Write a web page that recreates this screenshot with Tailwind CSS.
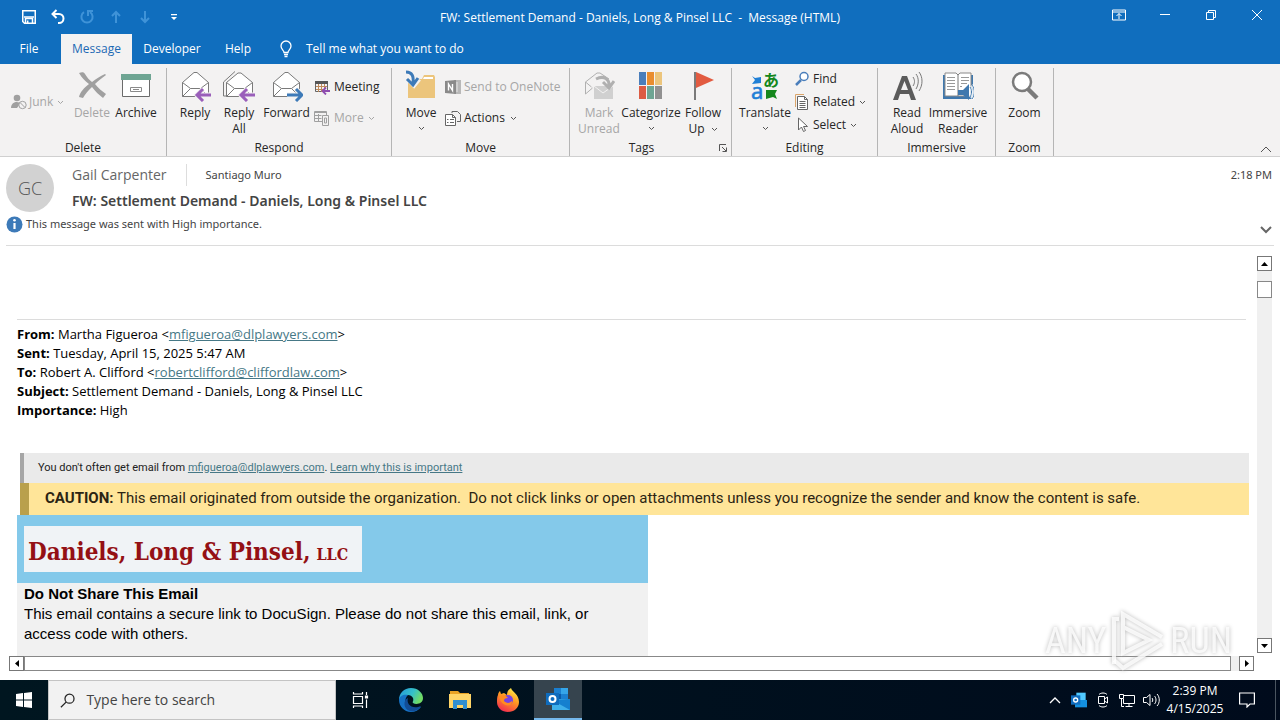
<!DOCTYPE html>
<html lang="en">
<head>
    <meta charset="UTF-8">
    <meta name="viewport" content="width=device-width, initial-scale=1.0">
    <title>FW: Settlement Demand - Daniels, Long &amp; Pinsel LLC - Message (HTML)</title>
    <script src="https://cdn.jsdelivr.net/npm/@tailwindcss/browser@4"></script>
</head>
<body class="h-screen flex flex-col overflow-hidden bg-white font-['Open_Sans',sans-serif] text-xs text-[#262626]">
    <!-- Title bar -->
    <header class="bg-[#106ebe] text-white shrink-0">
        <div class="grid grid-cols-[1fr_auto_1fr] h-[34px] items-center">
            <div class="flex items-center gap-[13px] pl-[21px]">
                <button aria-label="Save" class="w-4 h-4"><svg viewBox="0 0 16 16" fill="none" stroke="white" stroke-width="1.5"><path d="M1.75 1.75h12.5v12.5H3.5L1.75 12.5z"/><path d="M3 8h10"/><path d="M4.5 14v-4.5h7V14M6.7 11.5V14" /></svg></button>
                <button aria-label="Undo" class="w-4 h-4"><svg viewBox="0 0 16 16" fill="none" stroke="white" stroke-width="2"><path d="M6.5 1L2.5 5l4 4"/><path d="M2.5 5H9a4.5 4.5 0 0 1 0 9H8"/></svg></button>
                <button aria-label="Redo" class="w-4 h-4"><svg viewBox="0 0 16 16" fill="none" stroke="#3f93d8" stroke-width="2"><path d="M5 3.2A5.6 5.6 0 1 0 11 3.2"/><path d="M9 7V2h5"/></svg></button>
                <button aria-label="Previous item" class="w-4 h-4"><svg viewBox="0 0 16 16" fill="none" stroke="#3f93d8" stroke-width="2"><path d="M8 14V3M4 7l4-4 4 4"/></svg></button>
                <button aria-label="Next item" class="w-4 h-4"><svg viewBox="0 0 16 16" fill="none" stroke="#3f93d8" stroke-width="2"><path d="M8 2v11M4 9l4 4 4-4"/></svg></button>
                <button aria-label="Customize toolbar" class="w-4 h-4"><svg viewBox="0 0 16 16"><path d="M5 5h6v1.3H5zM5 8h6l-3 3z" fill="white"/></svg></button>
            </div>
            <h1 class="whitespace-pre pt-0.5">FW: Settlement Demand - Daniels, Long &amp; Pinsel LLC  -  Message (HTML)</h1>
            <div class="flex justify-end items-center h-full pb-1">
                <button aria-label="Ribbon display options" class="w-[46px] flex justify-center"><svg width="14" height="12" viewBox="0 0 14 12" fill="none" stroke="white"><path d="M.5 1h13v10H.5zM.5 3h13M7 10V4.5M4.5 7L7 4.5 9.500 7"/></svg></button>
                <button aria-label="Minimize" class="w-[46px] flex justify-center"><svg width="12" height="12" viewBox="0 0 12 12" stroke="white"><path d="M1 5.500h10"/></svg></button>
                <button aria-label="Restore" class="w-[46px] flex justify-center"><svg width="12" height="12" viewBox="0 0 12 12" fill="none" stroke="white"><path d="M1.500 3.500h7v7h-7zM3.500 3V1.500h7v7H9"/></svg></button>
                <button aria-label="Close" class="w-[46px] flex justify-center"><svg width="12" height="12" viewBox="0 0 12 12" stroke="white"><path d="M1 1l10 10M11 1L1 11"/></svg></button>
            </div>
        </div>
        <nav class="flex h-[30px] items-stretch pl-1">
            <button class="w-[50px]">File</button>
            <button class="w-[71px] ml-[7px] bg-[#f3f2f2] text-[#1b69b4]">Message</button>
            <button class="w-20">Developer</button>
            <button class="w-[52px]">Help</button>
            <button class="flex items-center gap-3 ml-[14px]">
                <svg width="16" height="18" viewBox="0 0 16 18" fill="none" stroke="white" stroke-width="1.3"><path d="M6 12.500C6 10.500 3 9.500 3 6a5 5 0 0 1 10 0c0 3.500-3 4.500-3 6.500zM6 14.500h4M6.500 16.500h3"/></svg>
                Tell me what you want to do
            </button>
        </nav>
    </header>

    <!-- Ribbon -->
    <section class="relative flex h-[93px] shrink-0 bg-[#f3f2f2] border-b border-[#d0d0d0] pt-1 leading-4">
        <div class="w-[167px] flex flex-col border-r border-[#b5b5b5]">
            <div class="flex grow">
                <button class="w-[70px] h-16 pt-1 pl-[11px] flex items-center gap-0.5 text-[#a6a6a6]">
                    <svg width="16" height="16" viewBox="0 0 16 16"><circle cx="6" cy="4" r="3.300" fill="#a0a0a0"/><path d="M0 14c0-7 9-7 9-4l-3 4z" fill="#a0a0a0"/><circle cx="11.500" cy="11" r="3.700" fill="#f3f2f2" stroke="#a0a0a0"/><path d="M9 8.500l5 5" stroke="#a0a0a0"/></svg>
                    <span>Junk</span>
                    <svg width="7" height="5" viewBox="0 0 7 5" class="ml-0.5" fill="none" stroke="currentColor"><path d="M1 1l2.500 2.500L6 1"/></svg>
                </button>
                <button class="w-11 flex flex-col items-center text-[#a6a6a6]">
                    <svg width="32" height="32" viewBox="0 0 32 32" class="mt-0.5 mb-[3px]" fill="#a0a0a0"><path d="M3 3c3-1 5-1 6 1 2 3 4 6 7 8 4-3 8-6 13-8l1 1c-4 3-8 6-11 9 3 4 7 7 11 10l-3 4c-4-3-8-7-11-11-4 4-7 7-9 11l-4-1c1-5 5-9 10-13C9 11 6 8 3 3z"/></svg>
                    <span>Delete</span>
                </button>
                <button class="w-11 flex flex-col items-center">
                    <svg width="32" height="32" viewBox="0 0 32 32" class="mt-0.5 mb-[3px]"><path d="M2.500 8.500h27v18h-27z" fill="white" stroke="#6b6b6b"/><path d="M1 4h30v6H1z" fill="#6ea593"/><path d="M10.500 17.500h11v4h-11z" fill="white" stroke="#8a8a8a"/><path d="M13 19.500h6" stroke="#8a8a8a"/></svg>
                    <span>Archive</span>
                </button>
            </div>
            <span class="text-center">Delete</span>
        </div>
        <div class="w-[225px] flex flex-col border-r border-[#b5b5b5]">
            <div class="flex grow items-start pl-1.5">
                <button class="w-11 flex flex-col items-center">
                    <svg width="32" height="32" viewBox="0 0 32 32" class="mt-0.5 mb-[3px]" fill="white" stroke="#7a7a7a"><path d="M3.500 12.500L15 2.500h3l11.500 10v14h-26z"/><path d="M3.500 12.500l8 6h10l8-6M3.500 26.500l8-8M29.500 26.500l-8-8" fill="none"/><path d="M32 25H19M24 19l-6 6 6 6" stroke="#f3f2f2" stroke-width="5" fill="none"/><path d="M32 25H19M24 19l-6 6 6 6" stroke="#9a5fba" stroke-width="3" fill="none"/></svg>
                    <span>Reply</span>
                </button>
                <button class="w-11 flex flex-col items-center">
                    <svg width="32" height="32" viewBox="0 0 32 32" class="mt-0.5 mb-[3px]" fill="white" stroke="#7a7a7a"><path d="M3.500 26h-3V12L12 1.500" fill="none"/><path d="M3.500 12.500L15 3h3l11.500 9.500v14h-26z"/><path d="M3.500 12.500l8 6h10l8-6M3.500 26.500l8-8M29.500 26.500l-8-8" fill="none"/><path d="M32 25H19M24 19l-6 6 6 6" stroke="#f3f2f2" stroke-width="5" fill="none"/><path d="M32 25H19M24 19l-6 6 6 6" stroke="#9a5fba" stroke-width="3" fill="none"/></svg>
                    <span>Reply<br>All</span>
                </button>
                <button class="w-[51px] flex flex-col items-center">
                    <svg width="32" height="32" viewBox="0 0 32 32" class="mt-0.5 mb-[3px]" fill="white" stroke="#7a7a7a"><path d="M2.500 12.500L14 2.500h3l11.500 10v14h-26z"/><path d="M2.500 12.500l8 6h10l8-6M2.500 26.500l8-8M28.500 26.500l-8-8" fill="none"/><path d="M16 25h14M25 19l6 6-6 6" stroke="#f3f2f2" stroke-width="5" fill="none"/><path d="M16 25h14M25 19l6 6-6 6" stroke="#3d7ab8" stroke-width="3" fill="none"/></svg>
                    <span>Forward</span>
                </button>
                <div class="flex flex-col gap-[15px] pt-[11px] pl-0.5">
                    <button class="flex items-center gap-1">
                        <svg width="16" height="16" viewBox="0 0 16 16" fill="none"><path d="M1.500 2.500h12v10h-12z" stroke="#666"/><path d="M1 2h13v3H1z" fill="#555"/><path d="M4.500 5v8M7.500 5v8M10.500 5v4M2 7.500h11M2 10.500h7" stroke="#c08a5a"/><path d="M16 12H9M12 8.500L8.500 12l3.500 3.500" stroke="#8e4db0" stroke-width="1.800"/></svg>
                        <span>Meeting</span>
                    </button>
                    <button class="flex items-center gap-1 text-[#a6a6a6]">
                        <svg width="16" height="16" viewBox="0 0 16 16" fill="none" stroke="#a0a0a0"><path d="M.5 1.500h12v10H.5z"/><path d="M.5 2.500h12M.5 5.500h7M.5 8.500h7M4.500 4v7" /><path d="M8.500 5.500h6v10h-6z" fill="#f3f2f2"/><path d="M10.500 8v5h2V8z"/></svg>
                        <span>More</span>
                        <svg width="7" height="5" viewBox="0 0 7 5" fill="none" stroke="currentColor"><path d="M1 1l2.500 2.500L6 1"/></svg>
                    </button>
                </div>
            </div>
            <span class="text-center">Respond</span>
        </div>
        <div class="w-[178px] flex flex-col border-r border-[#b5b5b5]">
            <div class="flex grow items-start pl-2">
                <button class="w-[42px] flex flex-col items-center">
                    <svg width="32" height="32" viewBox="0 0 32 32" class="mt-0.5 mb-[3px]"><path d="M3 9h14l2-4h10l1 2v21H3z" fill="#ecc57c"/><path d="M19 7h9v2H18z" fill="white"/><path d="M2 2c6 0 8 4 7 12M4 10l5 5 5-6" fill="none" stroke="#f3f2f2" stroke-width="5"/><path d="M1 2c6 0 8 4 7 12M2 9l6 6 5-7" fill="none" stroke="#3d7ab8" stroke-width="3"/></svg>
                    <span>Move</span>
                    <svg width="7" height="5" viewBox="0 0 7 5" class="mt-[5px]" fill="none" stroke="#555"><path d="M1 1l2.500 2.500L6 1"/></svg>
                </button>
                <div class="flex flex-col gap-[15px] pt-[11px] pl-[3px]">
                    <button class="flex items-center gap-[3px] text-[#a6a6a6]">
                        <svg width="16" height="16" viewBox="0 0 16 16"><path d="M9 1h7v14H9z" fill="#b8b8b8"/><path d="M12 3v10" stroke="#e6e6e6"/><path d="M0 2l11-1v14L0 14z" fill="#8a8a8a"/><path d="M3.500 11.500V5l4 6.500V5" fill="none" stroke="white" stroke-width="1.400"/></svg>
                        <span>Send to OneNote</span>
                    </button>
                    <button class="flex items-center gap-[3px]">
                        <svg width="16" height="16" viewBox="0 0 16 16" fill="none" stroke="#666"><path d="M7 3V1.500h5.500l3 3v7H12"/><path d="M.5 4.500h7l3 3v8H.5z" fill="white"/><path d="M7.500 4.500v3h3M5 9.500h4M5 12.500h4M2 9.500h1.500M2 12.500h1.500"/></svg>
                        <span>Actions</span>
                        <svg width="7" height="5" viewBox="0 0 7 5" class="ml-0.5" fill="none" stroke="#555"><path d="M1 1l2.500 2.500L6 1"/></svg>
                    </button>
                </div>
            </div>
            <span class="text-center">Move</span>
        </div>
        <div class="w-[162px] flex flex-col border-r border-[#b5b5b5]">
            <div class="flex grow items-start pl-[7px]">
                <button class="w-11 flex flex-col items-center text-[#a6a6a6]">
                    <svg width="32" height="32" viewBox="0 0 32 32" class="mt-0.5 mb-[3px]" fill="none" stroke="#b0b0b0"><path d="M2.500 24V12L14 3h3l9 6M2.500 12l6 5M2.500 24l7-6"/><path d="M11 16h19v13H11z" fill="#d0d0d0" stroke="none"/><path d="M11 16l9 7 10-7" stroke="#f3f2f2"/><path d="M13 9c8-4 14 0 13 8M20 12l6 6 5-7" stroke="#b0b0b0" stroke-width="3"/></svg>
                    <span>Mark<br>Unread</span>
                </button>
                <button class="w-[60px] flex flex-col items-center">
                    <svg width="32" height="32" viewBox="0 0 32 32" class="mt-0.5 mb-[3px]"><path d="M4 2h7v13H4z" fill="#4a7ebb"/><path d="M12 2h7v13h-7z" fill="#e98d2f"/><path d="M20 2h7v13h-7z" fill="#ecc57c"/><path d="M4 16h7v13H4z" fill="#dc5c44"/><path d="M12 16h7v13h-7z" fill="#6ea593"/><path d="M20 16h7v13h-7z" fill="#919191"/></svg>
                    <span>Categorize</span>
                    <svg width="7" height="5" viewBox="0 0 7 5" class="mt-[5px]" fill="none" stroke="#555"><path d="M1 1l2.500 2.500L6 1"/></svg>
                </button>
                <button class="w-11 flex flex-col items-center">
                    <svg width="32" height="32" viewBox="0 0 32 32" class="mt-0.5 mb-[3px]"><path d="M8 2v28" stroke="#7a7a7a" stroke-width="2"/><path d="M9 2l18 8-18 8z" fill="#e25b41"/></svg>
                    <span>Follow</span>
                    <span class="flex items-center gap-1.5">Up <svg width="7" height="5" viewBox="0 0 7 5" fill="none" stroke="#555"><path d="M1 1l2.500 2.500L6 1"/></svg></span>
                </button>
            </div>
            <div class="grid grid-cols-[1fr_auto_1fr] items-center pr-[18px]">
                <span class="col-start-2">Tags</span>
                <button aria-label="Tag options" class="justify-self-end -mr-3.5"><svg width="8" height="8" viewBox="0 0 8 8" fill="none" stroke="#555"><path d="M.5 7V.5H7M3 3l4 4M7.500 3.500v4h-4"/></svg></button>
            </div>
        </div>
        <div class="w-[146px] flex flex-col border-r border-[#b5b5b5]">
            <div class="flex grow items-start pl-[9px]">
                <button class="w-12 flex flex-col items-center">
                    <svg width="32" height="32" viewBox="0 0 32 32" class="mt-0.5 mb-[3px] overflow-visible"><path d="M3 6l3 2 6-1v6l-9 1 3-4z" fill="#1f7fd6"/><text x="2" y="29" font-family="Noto Sans" font-size="22" fill="#1f7fd6" stroke="#1f7fd6" stroke-width=".6">a</text><text x="14" y="16" font-family="Noto Sans CJK JP" font-size="16" font-weight="700" fill="#14871c">あ</text><path d="M17 20h11l-2 4 2 5-4-2-7 2z" fill="#14871c"/></svg>
                    <span>Translate</span>
                    <svg width="7" height="5" viewBox="0 0 7 5" class="mt-[5px]" fill="none" stroke="#555"><path d="M1 1l2.500 2.500L6 1"/></svg>
                </button>
                <div class="flex flex-col gap-[7px] pt-[3px] pl-1.5">
                    <button class="flex items-center gap-0.5">
                        <svg width="16" height="16" viewBox="0 0 16 16" fill="none" stroke="#4a7ebb"><circle cx="9" cy="5.500" r="4" stroke-width="1.500" fill="white"/><path d="M6 9l-5 5" stroke-width="2.500"/></svg>
                        <span>Find</span>
                    </button>
                    <button class="flex items-center gap-0.5">
                        <svg width="16" height="16" viewBox="0 0 16 16" fill="none"><path d="M9 .5H.5V13" stroke="#dba56a"/><path d="M2.500 2.500h7l3 3v10h-10z" fill="white" stroke="#666"/><path d="M9.500 2.500v3h3M4.500 7.500h6M4.500 9.500h6M4.500 11.500h6M4.500 13.500h6" stroke="#666"/></svg>
                        <span>Related</span>
                        <svg width="7" height="5" viewBox="0 0 7 5" class="ml-0.5" fill="none" stroke="#555"><path d="M1 1l2.500 2.500L6 1"/></svg>
                    </button>
                    <button class="flex items-center gap-0.5">
                        <svg width="16" height="16" viewBox="0 0 16 16"><path d="M3.500 1v12l3-3 2 4.500 2-1L8.500 9.500h4z" fill="white" stroke="#666"/></svg>
                        <span>Select</span>
                        <svg width="7" height="5" viewBox="0 0 7 5" class="ml-0.5" fill="none" stroke="#555"><path d="M1 1l2.500 2.500L6 1"/></svg>
                    </button>
                </div>
            </div>
            <span class="text-center">Editing</span>
        </div>
        <div class="w-[118px] flex flex-col border-r border-[#b5b5b5]">
            <div class="flex grow items-start pl-[7px]">
                <button class="w-11 flex flex-col items-center">
                    <svg width="32" height="32" viewBox="0 0 32 32" class="mt-0.5 mb-[3px]"><path d="M2 30L11 6h5l9 24h-5l-2-6H9l-2 6zM10 20h7l-3.500-9z" fill="#5b5b5b"/><path d="M22 7c2 3 2 6 0 9M25 4c3 4 3 10 0 15M28 2c4 5 4 13 0 19" fill="none" stroke="#7a7a7a"/></svg>
                    <span>Read<br>Aloud</span>
                </button>
                <button class="w-[58px] flex flex-col items-center">
                    <svg width="32" height="32" viewBox="0 0 32 32" class="mt-0.5 mb-[3px]" fill="none"><path d="M1 5h30v24H1z" fill="#3f78ae"/><path d="M3 3h11l2 2 2-2h11v23H3z" fill="white" stroke="#8a8a8a"/><path d="M16 4v22" stroke="#777"/><path d="M5 7.500h8M5 10.500h8M5 13.500h8M5 16.500h8M5 19.500h8M19 7.500h8M19 10.500h8M19 13.500h6M18 16.500h2" stroke="#999"/><path d="M16 20h5l6-6v16l-6-5h-5z" fill="#3f78ae"/><path d="M28 17c2 3 2 7 0 10M30 15c3 4 3 10 0 14" stroke="white" stroke-width="2.500"/><path d="M28 17c2 3 2 7 0 10M30 15c3 4 3 10 0 14" stroke="#3f78ae"/></svg>
                    <span>Immersive<br>Reader</span>
                </button>
            </div>
            <span class="text-center">Immersive</span>
        </div>
        <div class="w-[58px] flex flex-col border-r border-[#b5b5b5]">
            <button class="grow flex flex-col items-center">
                <svg width="32" height="32" viewBox="0 0 32 32" class="mt-0.5 mb-[3px]" fill="none" stroke="#7b7b7b"><circle cx="13" cy="12" r="9" fill="white" stroke-width="2.500"/><path d="M19 19l9 9" stroke-width="4.500"/></svg>
                <span>Zoom</span>
            </button>
            <span class="text-center">Zoom</span>
        </div>
        <button aria-label="Collapse ribbon" class="absolute right-2 bottom-[3px]"><svg width="12" height="7" viewBox="0 0 12 7" fill="none" stroke="#555"><path d="M1 6l5-5 5 5"/></svg></button>
    </section>

    <!-- Message header -->
    <section class="shrink-0 mx-1.5 pt-[7px] h-[89px] border-b border-[#dcdcdc] text-[#444] font-['Noto_Sans',sans-serif]">
        <div class="flex">
            <div class="w-12 h-12 rounded-full bg-[#d2d2d2] flex items-center justify-center text-lg text-[#555] font-light font-['Open_Sans',sans-serif]">GC</div>
            <div class="ml-[18px] grow">
                <div class="flex items-center h-[22px]">
                    <span class="text-sm text-[#666] font-['Open_Sans',sans-serif]">Gail Carpenter</span>
                    <span class="ml-[19px] pl-[19px] border-l border-[#ddd] h-[22px] flex items-center text-[11px]">Santiago Muro</span>
                    <time class="ml-auto mr-0.5 text-[11px]">2:18 PM</time>
                </div>
                <h2 class="text-sm font-semibold mt-1 leading-[22px]">FW: Settlement Demand - Daniels, Long &amp; Pinsel LLC</h2>
            </div>
        </div>
        <div class="flex items-center gap-[3px] mt-1 h-4 text-[11px]">
            <svg width="17" height="17" viewBox="0 0 17 17"><circle cx="8.500" cy="8.500" r="8" fill="#3d7ab8"/><path d="M8.500 7v6" stroke="white" stroke-width="2.200"/><circle cx="8.500" cy="4.300" r="1.300" fill="white"/></svg>
            <span>This message was sent with High importance.</span>
            <button aria-label="Expand header" class="ml-auto mr-0.5 mt-3"><svg width="12" height="8" viewBox="0 0 12 8" fill="none" stroke="#666" stroke-width="2"><path d="M1 1l5 5 5-5"/></svg></button>
        </div>
    </section>

    <!-- Message body with its scrollbars -->
    <main class="relative grow min-h-0 flex flex-col pb-[9px]">
        <div class="grow min-h-0 flex">
            <article class="grow min-w-0 overflow-hidden pl-[17px] text-black">
                <dl class="mt-[73px] mr-[11px] pt-[5px] border-t border-[#dcdcdc] text-[13px] leading-[19px]">
                    <div><dt class="inline font-bold">From:</dt> <dd class="inline">Martha Figueroa &lt;<a href="#" class="text-[#467886] underline">mfigueroa@dlplawyers.com</a>&gt;</dd></div>
                    <div><dt class="inline font-bold">Sent:</dt> <dd class="inline">Tuesday, April 15, 2025 5:47 AM</dd></div>
                    <div><dt class="inline font-bold">To:</dt> <dd class="inline">Robert A. Clifford &lt;<a href="#" class="text-[#467886] underline">robertclifford@cliffordlaw.com</a>&gt;</dd></div>
                    <div><dt class="inline font-bold">Subject:</dt> <dd class="inline">Settlement Demand - Daniels, Long &amp; Pinsel LLC</dd></div>
                    <div><dt class="inline font-bold">Importance:</dt> <dd class="inline">High</dd></div>
                </dl>
                <div class="mt-[33px] ml-[3px] mr-2">
                    <p class="h-[30px] flex items-center border-l-4 border-[#a6a6a6] bg-[#eaeaea] pl-[14px] text-[11px] text-[#212121] whitespace-pre font-['Roboto',sans-serif]">You don't often get email from <a href="#" class="text-[#467886] underline">mfigueroa@dlplawyers.com</a>. <a href="#" class="text-[#467886] underline">Learn why this is important</a></p>
                    <p class="h-8 flex items-center border-l-[9px] border-[#b9a04c] bg-[#ffe599] pl-4 text-[15px] text-[#2b2413] whitespace-pre font-['Roboto',sans-serif]"><b>CAUTION:</b> This email originated from outside the organization.  Do not click links or open attachments unless you recognize the sender and know the content is safe.</p>
                </div>
                <div class="w-[631px] bg-[#f1f1f1] h-[200px]">
                    <div class="bg-[#84c9ea] py-[11px] pl-[7px]">
                        <div class="w-[338px] h-[46px] bg-[#f0f3f6] flex items-baseline pt-2.5 pl-1 gap-1.5 text-[#941014] text-2xl font-bold whitespace-nowrap font-['DejaVu_Serif_Condensed','DejaVu_Serif',serif]">Daniels, Long &amp; Pinsel, <span class="text-base">LLC</span></div>
                    </div>
                    <div class="pl-[7px] pt-px text-[15px] leading-5 font-['Liberation_Sans',sans-serif]">
                        <p class="font-bold">Do Not Share This Email</p>
                        <p>This email contains a secure link to DocuSign. Please do not share this email, link, or<br>access code with others.</p>
                    </div>
                </div>
            </article>
            <div class="w-[15px] mr-2 mt-2.5 mb-[3px] flex flex-col bg-[#f0f0f0] shrink-0">
                <button aria-label="Scroll up" class="h-[15px] border border-[#777] bg-white flex items-center justify-center"><svg width="7" height="4" viewBox="0 0 7 4"><path d="M0 4l3.500-4L7 4z"/></svg></button>
                <div class="mt-[10px] h-[17px] border border-[#888] bg-white"></div>
                <button aria-label="Scroll down" class="mt-auto h-[15px] border border-[#777] bg-white flex items-center justify-center"><svg width="7" height="4" viewBox="0 0 7 4"><path d="M0 0l3.500 4L7 0z"/></svg></button>
            </div>
        </div>
        <div class="h-[15px] shrink-0 ml-[9px] mr-[26px] flex bg-[#f0f0f0]">
            <button aria-label="Scroll left" class="w-[15px] border border-[#777] bg-white flex items-center justify-center"><svg width="4" height="7" viewBox="0 0 4 7"><path d="M4 0L0 3.500 4 7z"/></svg></button>
            <div class="grow mr-2 border border-[#888] bg-white"></div>
            <button aria-label="Scroll right" class="w-[15px] border border-[#777] bg-white flex items-center justify-center"><svg width="4" height="7" viewBox="0 0 4 7"><path d="M0 0l4 3.500L0 7z"/></svg></button>
        </div>
        <!-- ANY.RUN watermark -->
        <div class="absolute right-12 bottom-2 flex items-center gap-1 text-4xl leading-none text-white/80 font-['Liberation_Sans_Narrow','Roboto_Condensed','Roboto',sans-serif] drop-shadow-[0_0_2px_#aaa]">
            <span>ANY</span>
            <svg width="56" height="62" viewBox="0 0 56 62" fill="none" stroke="#fff" stroke-opacity=".8" stroke-width="4"><path d="M4 54V9h5M13 42V4l39 23M13 17v26l26-13z"/><path d="M4 50l9 8 39-24"/></svg>
            <span>RUN</span>
        </div>
    </main>

    <!-- Taskbar -->
    <footer class="h-10 shrink-0 flex items-stretch bg-linear-to-r from-[#001620] to-[#000b1c] text-white">
        <button aria-label="Start" class="w-12 flex items-center justify-center"><svg width="16" height="16" viewBox="0 0 16 16" fill="white"><path d="M0 2l7-1v6.500H0zM8 1l8-1v7.500H8zM0 8.500h7V15l-7-1zM8 8.500h8V16l-8-1z"/></svg></button>
        <label class="w-72 flex items-center bg-[#f2f2f2] border border-[#c4c4c4] pl-[11px] gap-[11px]">
            <svg width="17" height="17" viewBox="0 0 17 17" fill="none" stroke="#222" stroke-width="1.400"><circle cx="10.500" cy="6.500" r="5"/><path d="M7 10l-6 6"/></svg>
            <input type="text" aria-label="Search" placeholder="Type here to search" class="w-full bg-transparent outline-none text-sm placeholder:text-[#444]">
        </label>
        <button aria-label="Task view" class="w-12 flex items-center justify-center"><svg width="18" height="18" viewBox="0 0 18 18" fill="none" stroke="white" stroke-width="1.200"><path d="M2.500 5.500h9v7h-9zM2.500 1v2h9V1M2.500 17v-2h9v2M15.500 1v3M15.500 8.500V17"/><path d="M14.500 5h2v2h-2z" fill="white"/></svg></button>
        <button aria-label="Edge" class="w-[54px] flex items-center justify-center"><svg width="24" height="24" viewBox="0 0 24 24"><defs><linearGradient id="edge" x1="0" y1="0" x2="1" y2=".4"><stop stop-color="#2496dc"/><stop offset=".6" stop-color="#35c1c9"/><stop offset="1" stop-color="#71dc66"/></linearGradient></defs><path d="M0 12C0 5 5 0 12 0s12 5 12 10c0 6-7 7-10 5-1-1 1-2 0-5-1-2-3-3-5-3-4 0-7 2-9 5z" fill="url(#edge)"/><path d="M0 12c0-4 5-6 9-5-4 3-4 12 5 14 4 1 6-2 8-2-2 3-6 5-10 5C5 24 0 18 0 12z" fill="#1671c4"/><path d="M9 10c-2 6 4 12 13 8-3 5-8 6-11 5-7-2-7-11-2-13z" fill="#124d96"/></svg></button>
        <button aria-label="File Explorer" class="w-11 flex items-center justify-center"><svg width="22" height="20" viewBox="0 0 22 20"><path d="M1 1h8l2 2h9v4H1z" fill="#e9a325"/><path d="M0 4h22v14H0z" fill="#ffd567"/><path d="M4 10h14v9h-4v-4H8v4H4z" fill="#318fd0"/></svg></button>
        <button aria-label="Firefox" class="w-[52px] flex items-center justify-center"><svg width="24" height="24" viewBox="0 0 24 24"><defs><linearGradient id="fox" x1=".8" y1="0" x2=".3" y2="1"><stop stop-color="#fff44f"/><stop offset=".45" stop-color="#ff9a22"/><stop offset="1" stop-color="#f32b50"/></linearGradient></defs><path d="M2 7c0-2 1-3 2-4l1 3 3-1 3 2c0-3 1-5 4-7 1 4 8 6 8 14 0 6-5 10-11 10S1 20 1 14c0-3 0-5 1-7z" fill="url(#fox)"/><circle cx="12" cy="12" r="5" fill="#7642e4"/><path d="M3 9c4-3 7-2 9 1-3 0-4 1-4 3 2 2 5 3 8 0 1 6-10 7-13-4z" fill="#ff8b21"/></svg></button>
        <button aria-label="Outlook" class="w-12 flex items-center justify-center bg-[#36444e] border-b-2 border-[#76b9ed]"><svg width="24" height="22" viewBox="0 0 24 22"><path d="M8 0h14v13H8z" fill="#1a7fd0"/><path d="M15 0h7v6h-7z" fill="#35a5e8"/><path d="M8 6h7v7H8z" fill="#0a5ba8"/><path d="M6 11h18v11H6z" fill="#3fb0ea"/><path d="M24 11v11L6 12z" fill="#1580cf"/><path d="M0 5h13v12H0z" fill="#0f6cbd"/><circle cx="6.500" cy="11" r="3" fill="none" stroke="white" stroke-width="2"/></svg></button>
        <div class="ml-auto flex items-center">
            <button aria-label="Hidden icons" class="w-6 flex justify-center"><svg width="12" height="8" viewBox="0 0 12 8" fill="none" stroke="white" stroke-width="1.300"><path d="M1 7l5-5 5 5"/></svg></button>
            <button aria-label="Outlook status" class="w-6 flex justify-center"><svg width="16" height="16" viewBox="0 0 24 22"><path d="M8 0h14v13H8z" fill="#50c9ff"/><path d="M6 11h18v11H6z" fill="#1490df"/><path d="M0 4h14v14H0z" fill="#0f6cbd"/><circle cx="7" cy="11" r="3" fill="none" stroke="white" stroke-width="2"/></svg></button>
            <button aria-label="Camera" class="w-6 flex justify-center"><svg width="16" height="16" viewBox="0 0 16 16" fill="none" stroke="white"><path d="M3.500 4.500h6v7h-6zM9.500 7l3-2v6l-3-2M4 2.500c2-2 6-2 8 0M4 13.500c2 2 6 2 8 0"/></svg></button>
            <button aria-label="Network" class="w-6 flex justify-center"><svg width="16" height="16" viewBox="0 0 16 16" fill="none" stroke="white"><path d="M5 3.500h10.500v8H4.500V7M10 11.500v3M6.500 14.500h7M.5 2.500h4v4h-4zM2.500 6.500v8H5"/></svg></button>
            <button aria-label="Volume" class="w-6 flex justify-center"><svg width="17" height="16" viewBox="0 0 17 16" fill="none" stroke="white"><path d="M.5 5.500h3l3.500-3v11l-3.500-3h-3zM9 6c1 1 1 3 0 4M11.500 4c2 2 2 6 0 8M14 2c3 3 3 9 0 12"/></svg></button>
            <div class="w-16 text-center leading-[18px]">2:39 PM<br>4/15/2025</div>
            <button aria-label="Notifications" class="w-10 flex justify-center"><svg width="16" height="16" viewBox="0 0 16 16" fill="none" stroke="white" stroke-width="1.200"><path d="M.6 1h14.800v11H11l-3 3v-3H.6z"/></svg></button>
            <div class="ml-2 w-[5px] h-10 border-l border-[#4a5560]"></div>
        </div>
    </footer>
</body>
</html>
